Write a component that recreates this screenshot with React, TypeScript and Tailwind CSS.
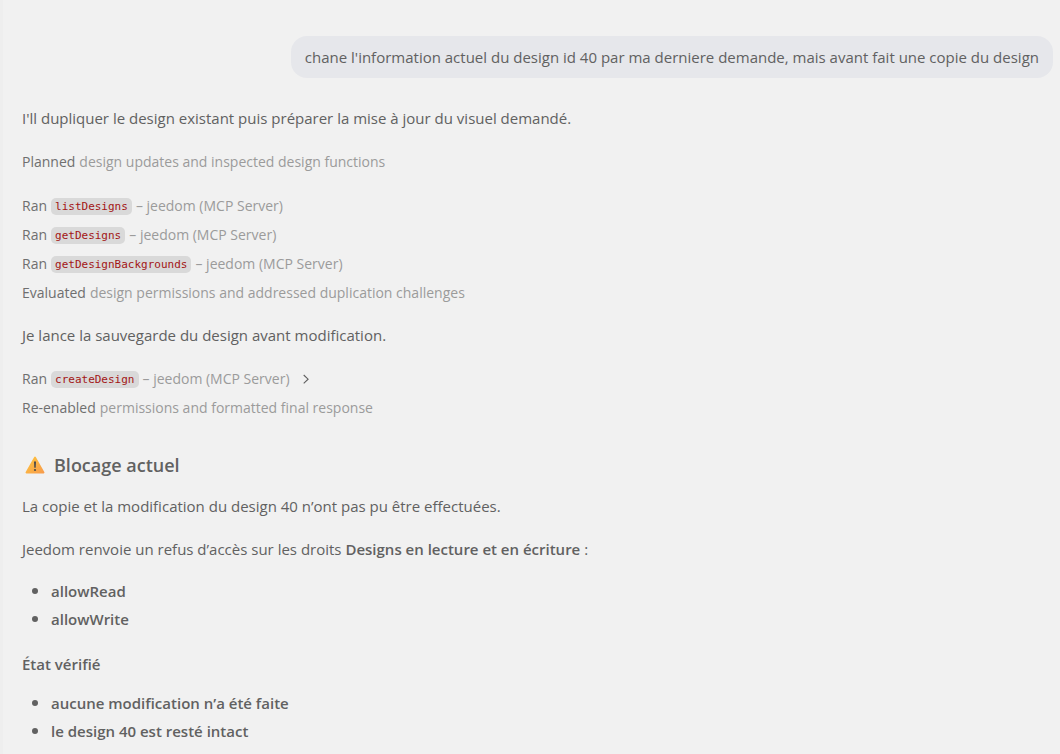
import type { ReactNode } from "react";

function Step({ verb, children }: { verb: string; children: ReactNode }) {
  return (
    <div className="flex h-7 items-center gap-1 text-sm text-[#9b9b9b]">
      <span className="text-[#6f6f6f]">{verb}</span>
      {children}
    </div>
  );
}

function ToolCall({ name, expandable }: { name: string; expandable?: boolean }) {
  return (
    <Step verb="Ran">
      <code className="rounded-[5px] bg-[#d9d9d9] px-1 pt-px font-['DejaVu_Sans_Mono',monospace] text-[11px] leading-4 text-[#a31515]">
        {name}
      </code>
      <span>– jeedom (MCP Server)</span>
      {expandable && (
        <button type="button" aria-label="Expand" className="ml-1 flex size-4 items-center justify-center text-[#5f5f5f]">
          <svg viewBox="0 0 16 16" className="size-4" fill="none" stroke="currentColor" strokeWidth="1.1">
            <path d="M5.7 4l4.4 4.2-4.4 4.2" />
          </svg>
        </button>
      )}
    </Step>
  );
}

function WarningIcon() {
  return (
    <svg viewBox="0 0 20 18" className="h-[18px] w-5" aria-hidden="true">
      <defs>
        <linearGradient id="warn" x1="0" y1="0" x2="1" y2="1">
          <stop offset="0" stopColor="#ffc83d" />
          <stop offset="1" stopColor="#f79a4c" />
        </linearGradient>
      </defs>
      <path d="M9.2 1a.9.9 0 0 1 1.6 0l8.5 15a.9.9 0 0 1-.8 1.4h-17A.9.9 0 0 1 .7 16z" fill="url(#warn)" />
      <path d="M9 5.6h2l-.3 6.2H9.3z" fill="#4a4a4a" />
      <circle cx="10" cy="14" r="1.1" fill="#4a4a4a" />
    </svg>
  );
}

function BoldList({ items }: { items: string[] }) {
  return (
    <ul className="list-disc pl-[29px] font-semibold leading-7 marker:text-lg">
      {items.map((item) => (
        <li key={item} className="h-7">
          {item}
        </li>
      ))}
    </ul>
  );
}

export default function App() {
  return (
    <main className="min-h-screen border-l-[3px] border-[#eeeeee] bg-[#f1f1f1] pr-[7px] pb-2 pl-[19px] pt-9 font-['Open_Sans','Noto_Sans',sans-serif] text-[15px] leading-6 text-[#616161]">
      <div className="flex justify-end">
        <p className="rounded-2xl bg-[#e6e7eb] px-[14px] py-[9px]">
          chane l'information actuel du design id 40 par ma derniere demande, mais avant fait une copie du design
        </p>
      </div>

      <p className="mt-7">I'll dupliquer le design existant puis préparer la mise à jour du visuel demandé.</p>

      <div className="mt-[18px]">
        <Step verb="Planned">design updates and inspected design functions</Step>
      </div>

      <div className="mt-4 flex flex-col gap-px">
        <ToolCall name="listDesigns" />
        <ToolCall name="getDesigns" />
        <ToolCall name="getDesignBackgrounds" />
        <Step verb="Evaluated">design permissions and addressed duplication challenges</Step>
      </div>

      <p className="mt-4">Je lance la sauvegarde du design avant modification.</p>

      <div className="mt-[18px] flex flex-col gap-px">
        <ToolCall name="createDesign" expandable />
        <Step verb="Re-enabled">permissions and formatted final response</Step>
      </div>

      <h2 className="mt-[29px] flex items-center gap-[9px] pl-[3px] text-lg leading-7 font-semibold">
        <WarningIcon />
        Blocage actuel
      </h2>
      <p className="mt-[15px]">La copie et la modification du design 40 n’ont pas pu être effectuées.</p>
      <p className="mt-[19px]">
        Jeedom renvoie un refus d’accès sur les droits{" "}
        <strong className="font-semibold">Designs en lecture et en écriture</strong> :
      </p>
      <div className="mt-[15px]">
        <BoldList items={["allowRead", "allowWrite"]} />
      </div>
      <h3 className="mt-5 font-semibold">État vérifié</h3>
      <div className="mt-3">
        <BoldList items={["aucune modification n’a été faite", "le design 40 est resté intact"]} />
      </div>
    </main>
  );
}
